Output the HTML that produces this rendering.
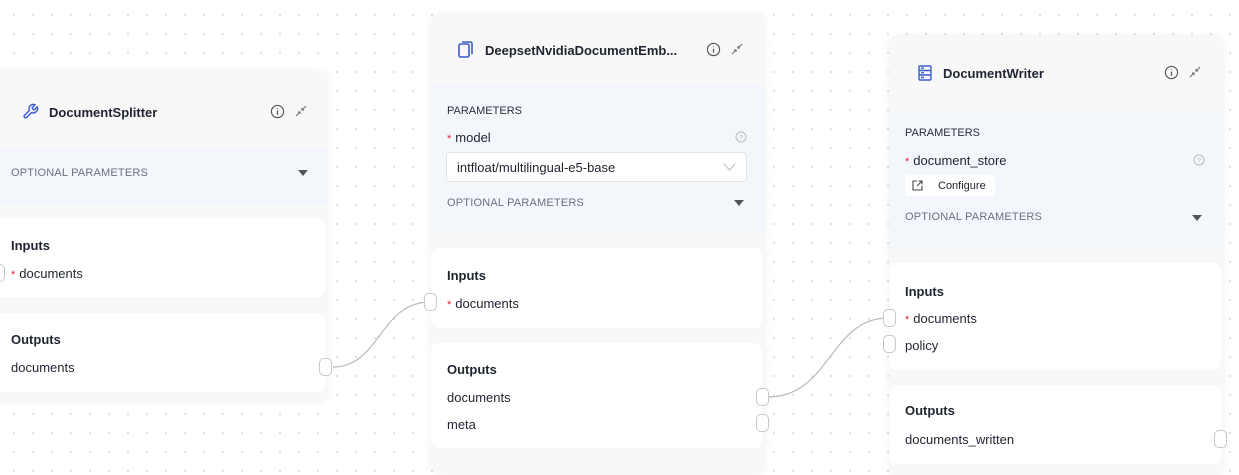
<!DOCTYPE html>
<html><head><style>
*{box-sizing:border-box;margin:0;padding:0}
body{width:1239px;height:469px;overflow:hidden;position:relative;font-family:"Liberation Sans",sans-serif;color:#1f2430;
background-color:#fff;background-image:radial-gradient(circle,#e0e0e0 1px,transparent 1.3px);background-size:19px 19px;background-position:4.5px 5.5px}
.node{position:absolute;background:#f8f8f8;border-radius:10px;box-shadow:0 2px 8px rgba(0,0,0,.06)}
.lbl{position:absolute;font-size:13px}
.h{font-weight:600;font-size:13px}
.band{position:absolute;left:0;right:0;background:#f3f6fb}
.card{position:absolute;left:0;right:3px;background:#fff;border-radius:8px}
.cap{position:absolute;font-size:11px;color:#6b7080;letter-spacing:.2px}
.capd{position:absolute;font-size:11px;color:#2a2f3a}
.tri{position:absolute;width:0;height:0;border-left:5px solid transparent;border-right:5px solid transparent;border-top:6px solid #555}
.star{color:#d23;font-size:11px;margin-right:4px}
.hd{position:absolute;width:13px;height:18px;border:1px solid #c8c8c8;border-radius:5px;background:#fff}
.ic{position:absolute}
</style></head><body>
<svg style="position:absolute;left:0;top:0" width="1239" height="469"><path d="M333 367 C380 367,380 302,430 302" stroke="#bbb" fill="none" stroke-width="1.2"/><path d="M768 397 C830 397,830 318,888 318" stroke="#bbb" fill="none" stroke-width="1.2"/></svg>

<div class="node" style="left:-12px;top:70px;width:340px;height:330px">
 <div class="band" style="top:78px;height:57px"></div>
 <div class="card" style="top:148px;height:79px"></div>
 <div class="card" style="top:243px;height:79px"></div>
</div>
<svg class="ic" style="left:22px;top:103px" width="17" height="17" viewBox="0 0 24 24" fill="none" stroke="#3b5bcc" stroke-width="2" stroke-linecap="round" stroke-linejoin="round"><path d="M14.7 6.3a1 1 0 0 0 0 1.4l1.6 1.6a1 1 0 0 0 1.4 0l3.77-3.770a6 6 0 0 1-7.94 7.94l-6.91 6.91a2.12 2.12 0 0 1-3-3l6.91-6.91a6 6 0 0 1 7.94-7.94l-3.76 3.76z"/></svg>
<div class="lbl h" style="left:49px;top:105px">DocumentSplitter</div>
<svg class="ic" style="left:270px;top:104px" width="15" height="15" viewBox="0 0 16 16"><circle cx="8" cy="8" r="6.5" fill="none" stroke="#555" stroke-width="1.2"/><path d="M8 7v4.5M8 4.6v.8" stroke="#555" stroke-width="1.3"/></svg>
<svg class="ic" style="left:295px;top:105px" width="12" height="12" viewBox="0 0 12 12" stroke="#777" stroke-width="1.2"><path d="M1 11l4-4M3 7h2v2M11 1l-4 4M7 3v2h2"/></svg>
<div class="cap" style="left:11px;top:167px">OPTIONAL PARAMETERS</div>
<div class="tri" style="left:298px;top:170px"></div>
<div class="lbl h" style="left:11px;top:238px">Inputs</div>
<div class="lbl" style="left:11px;top:266px"><span class="star">*</span>documents</div>
<div class="hd" style="left:-8px;top:264px"></div>
<div class="lbl h" style="left:11px;top:332px">Outputs</div>
<div class="lbl" style="left:11px;top:360px">documents</div>
<div class="hd" style="left:319px;top:358px"></div>

<div class="node" style="left:431px;top:12px;width:334px;height:460px">
 <div class="band" style="top:73px;height:148px"></div>
 <div class="card" style="top:236px;height:80px"></div>
 <div class="card" style="top:331px;height:105px"></div>
</div>
<svg class="ic" style="left:458px;top:41px" width="15" height="17" viewBox="0 0 15 17" fill="none" stroke="#3b5bcc" stroke-width="1.6"><rect x="1" y="3" width="10" height="13" rx="1.5"/><path d="M4 1h8.5a1.5 1.5 0 0 1 1.5 1.5V13"/></svg>
<div class="lbl h" style="left:485px;top:43px">DeepsetNvidiaDocumentEmb...</div>
<svg class="ic" style="left:706px;top:42px" width="15" height="15" viewBox="0 0 16 16"><circle cx="8" cy="8" r="6.5" fill="none" stroke="#555" stroke-width="1.2"/><path d="M8 7v4.5M8 4.6v.8" stroke="#555" stroke-width="1.3"/></svg>
<svg class="ic" style="left:731px;top:43px" width="12" height="12" viewBox="0 0 12 12" stroke="#777" stroke-width="1.2"><path d="M1 11l4-4M3 7h2v2M11 1l-4 4M7 3v2h2"/></svg>
<div class="capd" style="left:447px;top:105px">PARAMETERS</div>
<div class="lbl" style="left:447px;top:130px"><span class="star">*</span>model</div>
<svg class="ic" style="left:735px;top:131px" width="12" height="12" viewBox="0 0 12 12"><circle cx="6" cy="6" r="5" fill="none" stroke="#bbb"/><text x="6" y="9" font-size="7" text-anchor="middle" fill="#bbb" font-family="Liberation Sans">?</text></svg>
<div style="position:absolute;left:446px;top:152px;width:301px;height:30px;background:#fff;border:1px solid #e3e3e3;border-radius:4px"></div>
<div class="lbl" style="left:457px;top:160px">intfloat/multilingual-e5-base</div>
<svg class="ic" style="left:723px;top:163px" width="13" height="8" viewBox="0 0 13 8"><path d="M.5.5l6 6.5 6-6.5" fill="none" stroke="#bbb"/></svg>
<div class="cap" style="left:447px;top:197px">OPTIONAL PARAMETERS</div>
<div class="tri" style="left:734px;top:200px"></div>
<div class="lbl h" style="left:447px;top:268px">Inputs</div>
<div class="lbl" style="left:447px;top:296px"><span class="star">*</span>documents</div>
<div class="hd" style="left:424px;top:293px"></div>
<div class="lbl h" style="left:447px;top:362px">Outputs</div>
<div class="lbl" style="left:447px;top:390px">documents</div>
<div class="lbl" style="left:447px;top:417px">meta</div>
<div class="hd" style="left:756px;top:388px"></div>
<div class="hd" style="left:756px;top:414px"></div>

<div class="node" style="left:889px;top:35px;width:335px;height:440px">
 <div class="band" style="top:75px;height:138px"></div>
 <div class="card" style="top:228px;height:107px"></div>
 <div class="card" style="top:350px;height:79px"></div>
</div>
<svg class="ic" style="left:918px;top:65px" width="14" height="16" viewBox="0 0 14 16" fill="none" stroke="#3b5bcc" stroke-width="1.4"><rect x="1" y="1" width="12" height="14" rx="1"/><path d="M1 5.5h12M1 10h12M3 3.2h3M3 7.8h3M3 12.5h3"/></svg>
<div class="lbl h" style="left:943px;top:66px">DocumentWriter</div>
<svg class="ic" style="left:1164px;top:65px" width="15" height="15" viewBox="0 0 16 16"><circle cx="8" cy="8" r="6.5" fill="none" stroke="#555" stroke-width="1.2"/><path d="M8 7v4.5M8 4.6v.8" stroke="#555" stroke-width="1.3"/></svg>
<svg class="ic" style="left:1189px;top:66px" width="12" height="12" viewBox="0 0 12 12" stroke="#777" stroke-width="1.2"><path d="M1 11l4-4M3 7h2v2M11 1l-4 4M7 3v2h2"/></svg>
<div class="capd" style="left:905px;top:127px">PARAMETERS</div>
<div class="lbl" style="left:905px;top:153px"><span class="star">*</span>document_store</div>
<svg class="ic" style="left:1193px;top:154px" width="12" height="12" viewBox="0 0 12 12"><circle cx="6" cy="6" r="5" fill="none" stroke="#bbb"/><text x="6" y="9" font-size="7" text-anchor="middle" fill="#bbb" font-family="Liberation Sans">?</text></svg>
<div style="position:absolute;left:905px;top:175px;width:90px;height:21px;background:#fff;border-radius:3px"></div>
<svg class="ic" style="left:912px;top:180px" width="11" height="11" viewBox="0 0 11 11" fill="none" stroke="#444" stroke-width="1.1"><path d="M5 1H1v9h9V6M6.5 1H10v3.5M10 1L5 6"/></svg>
<div class="lbl" style="left:938px;top:180px;font-size:11px">Configure</div>
<div class="cap" style="left:905px;top:211px">OPTIONAL PARAMETERS</div>
<div class="tri" style="left:1192px;top:215px"></div>
<div class="lbl h" style="left:905px;top:284px">Inputs</div>
<div class="lbl" style="left:905px;top:311px"><span class="star">*</span>documents</div>
<div class="lbl" style="left:905px;top:338px">policy</div>
<div class="hd" style="left:883px;top:309px"></div>
<div class="hd" style="left:883px;top:335px"></div>
<div class="lbl h" style="left:905px;top:403px">Outputs</div>
<div class="lbl" style="left:905px;top:432px">documents_written</div>
<div class="hd" style="left:1214px;top:430px"></div>
</body></html>
